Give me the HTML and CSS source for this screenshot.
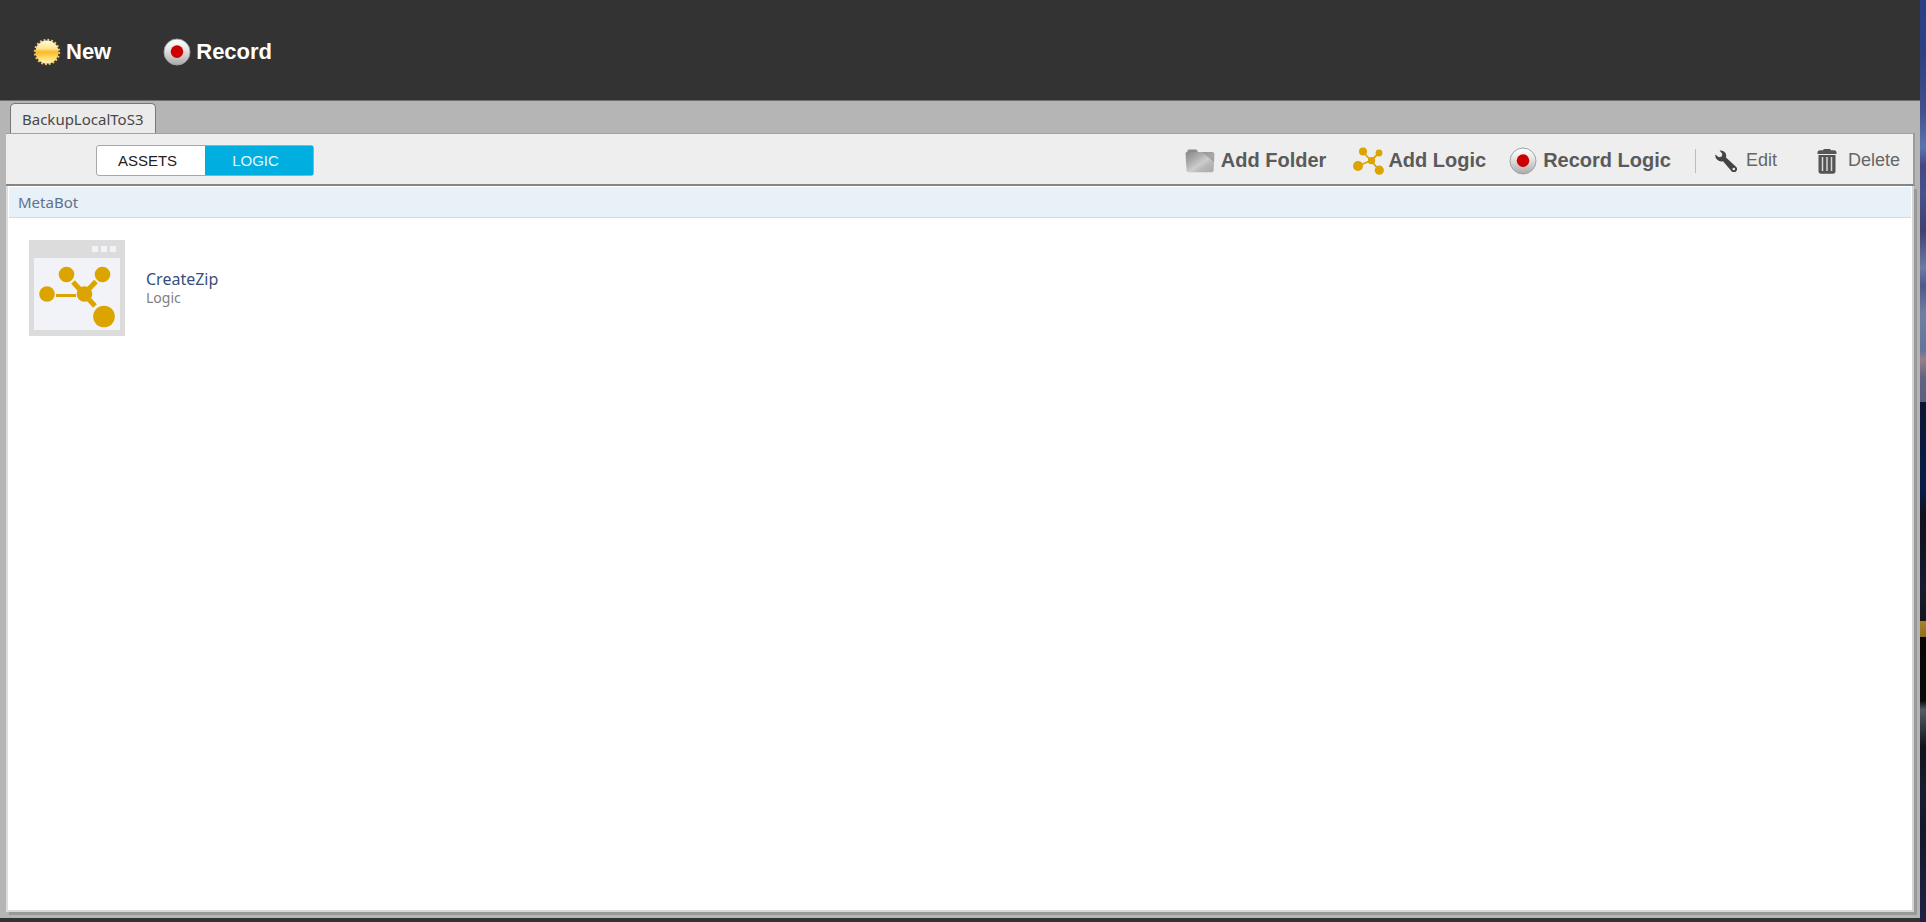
FILE: index.html
```html
<!DOCTYPE html>
<html lang="en">
<head>
<meta charset="utf-8">
<title>MetaBot Designer</title>
<link rel="stylesheet" href="styles.css">
</head>
<body>
<svg class="defs" width="0" height="0" aria-hidden="true">
  <defs>
    <linearGradient id="ring" x1="0" y1="0" x2="0" y2="1">
      <stop offset="0" stop-color="#fff"/><stop offset=".4" stop-color="#e6e6e6"/><stop offset="1" stop-color="#a9a9a9"/>
    </linearGradient>
    <linearGradient id="sun" x1="0" y1="0" x2="0" y2="1">
      <stop offset="0" stop-color="#fffbe8"/><stop offset=".35" stop-color="#ffe58a"/><stop offset=".5" stop-color="#fcb72a"/><stop offset=".7" stop-color="#ffd75a"/><stop offset="1" stop-color="#fff3c0"/>
    </linearGradient>
    <linearGradient id="folder" x1="0" y1="0" x2="1" y2="1">
      <stop offset="0" stop-color="#858585"/><stop offset=".35" stop-color="#b0b0b0"/><stop offset=".55" stop-color="#cdcdcd"/><stop offset=".7" stop-color="#b8b8b8"/><stop offset="1" stop-color="#a8a8a8"/>
    </linearGradient>
    <symbol id="record" viewBox="0 0 28 28">
      <circle cx="14" cy="14" r="13" fill="url(#ring)" stroke="#a3a3a3" stroke-width="1"/>
      <circle cx="14" cy="13.600" r="6.300" fill="#cc0000"/>
    </symbol>
  </defs>
</svg>
<div class="desktop">
  <div class="window">
    <header class="header">
      <button class="main-action" type="button">
        <svg class="icon-round" viewBox="0 0 28 28" aria-hidden="true">
          <circle cx="14" cy="14" r="12.200" fill="none" stroke="#f3c968" stroke-width="2" stroke-dasharray="1.900 1.933"/>
          <circle cx="14" cy="14" r="11.500" fill="url(#sun)"/>
        </svg>
        New
      </button>
      <button class="main-action" type="button">
        <svg class="icon-round" aria-hidden="true"><use href="#record"/></svg>
        Record
      </button>
    </header>
    <nav class="tabs">
      <button class="tab" type="button">BackupLocalToS3</button>
    </nav>
    <main class="panel">
      <div class="toolbar">
        <div class="switch">
          <button class="switch-item" type="button">ASSETS</button>
          <button class="switch-item active" type="button">LOGIC</button>
        </div>
        <div class="tools">
          <button class="tool strong" type="button">
            <svg class="icon-folder" viewBox="0 0 30 24" aria-hidden="true">
              <path d="M2 4 L2.500 1.500 Q2.700 .5 4 .5 H11 Q12.300 .5 12.500 2 L12.800 4Z" fill="#8c8c8c"/>
              <path d="M2 3 H27 Q29.500 3 29.300 5.500 L28.600 21.500 Q28.500 23.300 26.500 23.300 H3.500 Q1.600 23.300 1.500 21.500 L.6 4.500 Q.5 3 2 3Z" fill="url(#folder)"/>
              <path d="M17 3 H27 Q29.500 3 29.300 5.500 L29 13Z" fill="#7c7c7c" opacity=".45"/>
            </svg>
            Add Folder
          </button>
          <button class="tool strong logic" type="button">
            <svg class="icon-logic" viewBox="0 0 31 28" aria-hidden="true">
              <g fill="none" stroke="#dba400" stroke-width="1.800"><path d="M5 19 L18 13.500 M10 5 L18 13.500 M26 6 L18 13.500 L26 23"/></g>
              <g fill="#dba400"><circle cx="10" cy="4.500" r="4"/><circle cx="26" cy="6" r="3.400"/><circle cx="18.500" cy="13.700" r="3.600"/><circle cx="5" cy="19" r="5"/><circle cx="26.300" cy="23.200" r="4.600"/></g>
            </svg>
            Add Logic
          </button>
          <button class="tool strong record" type="button">
            <svg class="icon-round" aria-hidden="true"><use href="#record"/></svg>
            Record Logic
          </button>
          <span class="divider"></span>
          <button class="tool edit" type="button">
            <svg class="icon-wrench" viewBox="0 0 22 22" aria-hidden="true">
              <path d="M4.500 .6 Q8.500 -.3 10.500 3 Q11.600 5 11 7.500 L21 16.800 A3 3 0 0 1 16.800 21.400 L8 11.300 Q4.500 12 2 9.500 Q0 7.500 .3 4.500 L3.800 7.300 L6.800 6.600 L7.300 3.800Z" fill="#444"/>
              <circle cx="18.800" cy="19" r="1.300" fill="#eee"/>
            </svg>
            Edit
          </button>
          <button class="tool delete" type="button">
            <svg class="icon-trash" viewBox="0 0 20 26" aria-hidden="true">
              <path d="M6.500 2.300 V1 H13.500 V2.300 H17 Q19.500 2.300 19.500 5 V6 H.5 V5 Q.5 2.300 3 2.300Z M1.500 7 H18.500 V23 Q18.500 25.700 16 25.700 H4 Q1.500 25.700 1.500 23Z" fill="#555"/>
              <path d="M5.500 9 V23 M10 9 V23 M14.500 9 V23" stroke="#d8d8d8" stroke-width="1.500"/>
            </svg>
            Delete
          </button>
        </div>
      </div>
      <section class="content">
        <div class="breadcrumb">MetaBot</div>
        <ul class="items">
          <li class="item">
            <svg class="thumb" viewBox="0 0 96 96" aria-hidden="true">
              <path d="M0 0H96V96H0Z" fill="#dcdcdc"/>
              <path d="M5 18H91V90H5Z M63 6H69V12H63Z M72 6H78V12H72Z M81 6H87V12H81Z" fill="#f2f3f9"/>
              <g fill="none" stroke="#dba400"><path d="M27 55.500H47" stroke-width="3"/><path d="M44 42 L55 54 L67 41.500 M55 54 L66 66" stroke-width="5"/></g>
              <g fill="#dba400"><circle cx="37.500" cy="34.500" r="7.800"/><circle cx="73.500" cy="34.500" r="7.800"/><circle cx="18" cy="54" r="7.800"/><circle cx="55.500" cy="54" r="7.800"/><circle cx="75" cy="76.500" r="10.800"/></g>
            </svg>
            <div class="item-text">
              <span class="item-name">CreateZip</span>
              <span class="item-type">Logic</span>
            </div>
          </li>
        </ul>
      </section>
    </main>
    <footer class="statusbar"></footer>
  </div>
  <div class="wallpaper"></div>
</div>
</body>
</html>
```
FILE: styles.css
```css
* { box-sizing: border-box; }

body { margin: 0; font-family: "Liberation Sans", Arial, sans-serif; }

button {
  margin: 0;
  padding: 0;
  border: 0;
  background: none;
  font: inherit;
  color: inherit;
  white-space: nowrap;
}

svg { display: block; flex: none; }

.defs { position: absolute; }

.desktop { display: flex; min-height: 100vh; }

.window {
  flex: 1;
  display: flex;
  flex-direction: column;
  background: #b5b5b5;
}

.wallpaper {
  flex: none;
  width: 6px;
  background: linear-gradient(#293f83 0, #2c4182 6%, #45508c 12%, #5a74b0 16%, #454782 18%, #47518c 21%, #40406f 25%, #6c7ba4 29%, #50578a 31%, #7080a0 34%, #64749a 38%, #967e8c 39%, #606282 41%, #5c5f80 43.600%, #0b1733 43.600%, #0a1d47 53%, #101020 56%, #151b30 64%, #14161c 67.300%, #a98327 67.300%, #8c6e28 69.100%, #080604 69.100%, #0a0a0c 76%, #555b68 77%, #10121c 81%, #171c30 86%, #12172b 90%, #1e2346 100%);
}

.header {
  display: flex;
  align-items: center;
  gap: 52px;
  height: 101px;
  padding: 4px 34px 0 33px;
  background: #333;
  border-bottom: 1px solid #707070;
}

.main-action {
  display: flex;
  align-items: center;
  gap: 5px;
  font-size: 22px;
  font-weight: bold;
  color: #fff;
}

.icon-round { width: 28px; height: 28px; }

.tabs { display: flex; padding: 2px 10px 0; }

.tab {
  height: 30px;
  padding: 0 12px 0 11px;
  border: 1px solid #777;
  border-bottom: 0;
  border-radius: 5px 5px 0 0;
  background: #ebebeb;
  font-family: "Noto Sans", sans-serif;
  font-size: 15px;
  color: #484848;
}

.panel {
  flex: 1;
  display: flex;
  flex-direction: column;
  margin: 0 5px 0 6px;
}

.toolbar {
  display: flex;
  align-items: center;
  justify-content: space-between;
  height: 53px;
  padding: 3px 13px 0 90px;
  border-top: 1px solid #a2a2a2;
  border-right: 2px solid #9b9b9b;
  border-bottom: 2px solid #858585;
  background: #eee;
}

.switch {
  display: flex;
  border: 1px solid #a8a8a8;
  border-radius: 3px;
  background: #fff;
  font-size: 15px;
}

.switch-item { width: 108px; height: 29px; padding-right: 7px; color: #222; }
.switch-item.active { background: #00aee0; color: #e4f6fc; }

.tools { display: flex; align-items: center; color: #666; font-size: 18px; }
.tool { display: flex; align-items: center; gap: 6px; }
.strong { font-size: 20px; font-weight: bold; color: #5a5a5a; }
.logic { margin-left: 27px; gap: 4px; }
.record { margin-left: 23px; }
.edit { gap: 9px; }
.delete { margin-left: 40px; gap: 11px; }

.divider { width: 1px; height: 24px; margin: 0 19px 0 24px; background: #bcbcbc; }

.icon-folder { width: 30px; height: 24px; }
.icon-logic { width: 31px; height: 28px; }
.icon-wrench { width: 22px; height: 22px; }
.icon-trash { width: 20px; height: 26px; }

.content {
  flex: 1;
  border-left: 2px solid #ddd;
  border-bottom: 2px solid #d8d8d8;
  border-right: 2px solid #d4d4d4;
  margin-right: 1px;
  padding: 1px 1px 0;
  background: #fff;
  box-shadow: 3px 3px 0 #999;
  font-family: "Noto Sans", sans-serif;
}

.breadcrumb {
  height: 31px;
  padding: 0 9px;
  border-bottom: 1px solid #cfdcea;
  background: #e8f0f8;
  font-size: 15px;
  line-height: 31px;
  color: #60708d;
}

.items { margin: 0; padding: 22px 20px; list-style: none; }
.item { display: flex; align-items: center; gap: 21px; }
.thumb { width: 96px; height: 96px; }
.item-text { display: flex; flex-direction: column; }
.item-name { font-size: 16px; line-height: 20px; color: #35507b; }
.item-type { font-size: 14px; line-height: 18px; color: #808080; }

.statusbar { height: 4px; margin-top: 6px; background: #333; }
```
